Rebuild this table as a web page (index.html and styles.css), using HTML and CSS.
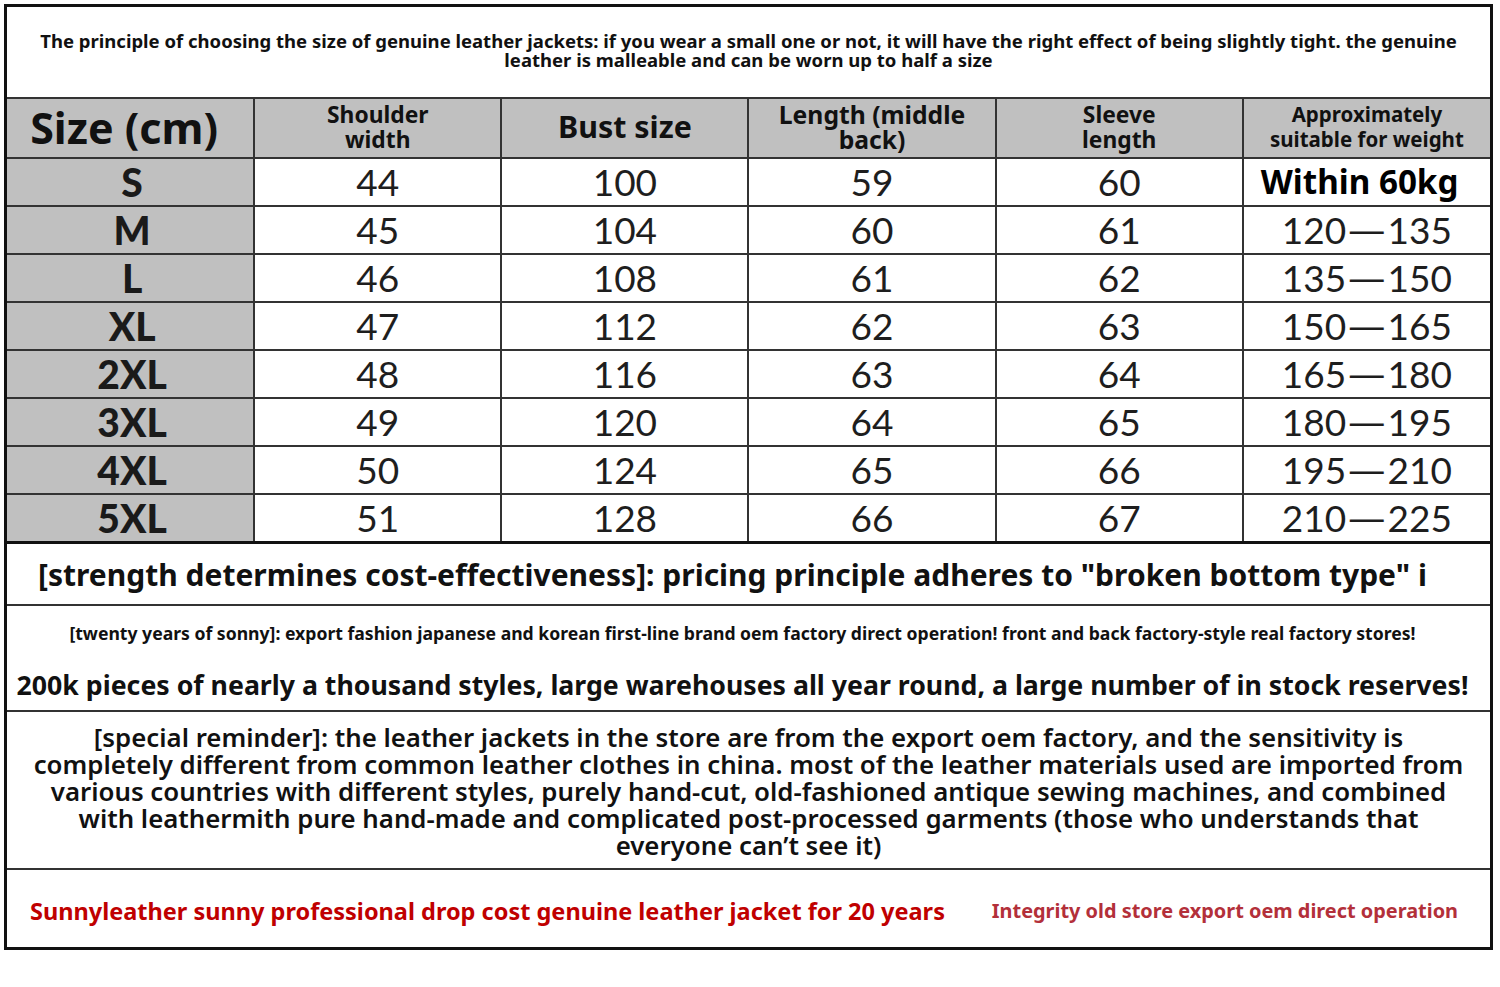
FILE: index.html
```html
<!DOCTYPE html>
<html>
<head>
<meta charset="utf-8">
<link rel="stylesheet" href="styles.css">
</head>
<body>
<div class="sheet">
  <div class="intro">
    <p>The principle of choosing the size of genuine leather jackets: if you wear a small one or not, it will have the right effect of being slightly tight. the genuine<br>leather is malleable and can be worn up to half a size</p>
  </div>
  <table class="chart">
    <thead>
      <tr>
        <th class="h-size">Size (cm)</th>
        <th class="h-sm">Shoulder<br>width</th>
        <th class="h-bust">Bust size</th>
        <th class="h-len">Length (middle<br>back)</th>
        <th class="h-sm">Sleeve<br>length</th>
        <th class="h-wt">Approximately<br>suitable for weight</th>
      </tr>
    </thead>
    <tbody>
      <tr><td class="sz">S</td><td>44</td><td>100</td><td>59</td><td>60</td><td class="within">Within 60kg</td></tr>
      <tr><td class="sz">M</td><td>45</td><td>104</td><td>60</td><td>61</td><td>120<span class="dash">—</span>135</td></tr>
      <tr><td class="sz">L</td><td>46</td><td>108</td><td>61</td><td>62</td><td>135<span class="dash">—</span>150</td></tr>
      <tr><td class="sz">XL</td><td>47</td><td>112</td><td>62</td><td>63</td><td>150<span class="dash">—</span>165</td></tr>
      <tr><td class="sz">2XL</td><td>48</td><td>116</td><td>63</td><td>64</td><td>165<span class="dash">—</span>180</td></tr>
      <tr><td class="sz">3XL</td><td>49</td><td>120</td><td>64</td><td>65</td><td>180<span class="dash">—</span>195</td></tr>
      <tr><td class="sz">4XL</td><td>50</td><td>124</td><td>65</td><td>66</td><td>195<span class="dash">—</span>210</td></tr>
      <tr><td class="sz">5XL</td><td>51</td><td>128</td><td>66</td><td>67</td><td>210<span class="dash">—</span>225</td></tr>
    </tbody>
  </table>
  <div class="strength">[strength determines cost-effectiveness]: pricing principle adheres to "broken bottom type" i</div>
  <div class="twenty">
    <p class="twenty-small">[twenty years of sonny]: export fashion japanese and korean first-line brand oem factory direct operation! front and back factory-style real factory stores!</p>
    <p class="twenty-big">200k pieces of nearly a thousand styles, large warehouses all year round, a large number of in stock reserves!</p>
  </div>
  <div class="reminder">
    <p>[special reminder]: the leather jackets in the store are from the export oem factory, and the sensitivity is<br>completely different from common leather clothes in china. most of the leather materials used are imported from<br>various countries with different styles, purely hand-cut, old-fashioned antique sewing machines, and combined<br>with leathermith pure hand-made and complicated post-processed garments (those who understands that<br>everyone can’t see it)</p>
  </div>
  <div class="brand">
    <span class="brand-main">Sunnyleather sunny professional drop cost genuine leather jacket for 20 years</span>
    <span class="brand-side">Integrity old store export oem direct operation</span>
  </div>
</div>
</body>
</html>
```

FILE: styles.css
```css
html, body {
  margin: 0;
  padding: 0;
  background: #fff;
}
body {
  font-family: "Noto Sans", "Open Sans", sans-serif;
  color: #111;
}
p { margin: 0; }

.sheet {
  margin: 4px 0 0 4px;
  width: 1483px;
  border: 3px solid #111;
  background: #fff;
}

.intro {
  height: 92px;
  border-bottom: 2px solid #333;
  display: flex;
  align-items: center;
  justify-content: center;
  text-align: center;
  padding: 0 10px;
  box-sizing: border-box;
}
.intro p {
  font-weight: 700;
  font-size: 18.5px;
  line-height: 19px;
  margin-top: -4px;
  white-space: nowrap;
}

.chart {
  width: 100%;
  border-collapse: collapse;
  table-layout: fixed;
}
.chart th, .chart td {
  border: 2px solid #333;
  padding: 0;
  text-align: center;
  vertical-align: middle;
}
.chart tr > :first-child { border-left: none; }
.chart tr > :last-child { border-right: none; }
.chart thead th {
  border-top: none;
  background: #c0c0c0;
  height: 59px;
  font-weight: 700;
  color: #111;
  padding-bottom: 3px;
  box-sizing: border-box;
}
.chart tbody tr:last-child td { border-bottom: 3px solid #111; }
.chart thead th.h-size { font-size: 43px; line-height: 44px; padding: 0 12px 0 0; }
.h-sm { font-size: 22.8px; line-height: 25px; }
.h-bust { font-size: 30.4px; }
.h-len { font-size: 24.7px; line-height: 25px; }
.h-wt { font-size: 20.5px; line-height: 25px; }

.chart td {
  height: 46px;
  font-family: "Lato", "Liberation Sans", sans-serif;
  font-size: 37px;
  color: #1e1e1e;
  line-height: 44px;
}
.chart td.sz {
  background: #c0c0c0;
  font-weight: 900;
  font-size: 39px;
  color: #1a1a1a;
  padding-left: 4px;
}
.chart td.within {
  font-family: "Noto Sans", sans-serif;
  font-weight: 700;
  font-size: 33.2px;
  color: #000;
  text-align: left;
  padding-left: 17px;
}
.dash {
  display: inline-block;
  transform: scaleX(1.38);
  margin: 0 6px;
}

.strength {
  height: 60px;
  border-bottom: 2px solid #333;
  display: flex;
  align-items: center;
  padding-left: 31px;
  font-weight: 700;
  font-size: 30px;
  color: #111;
  white-space: nowrap;
}

.twenty {
  height: 106px;
  border-bottom: 2px solid #333;
  text-align: center;
  box-sizing: border-box;
  padding: 16px 12px 0 0;
  white-space: nowrap;
}
.twenty-small {
  font-weight: 700;
  font-size: 17.6px;
  line-height: 22px;
}
.twenty-big {
  font-weight: 700;
  font-size: 26.7px;
  line-height: 34px;
  margin-top: 24px;
}

.reminder {
  height: 158px;
  border-bottom: 2px solid #333;
  text-align: center;
  box-sizing: border-box;
  padding-top: 12px;
  white-space: nowrap;
}
.reminder p {
  font-weight: 600;
  font-size: 25.8px;
  line-height: 27px;
}

.brand {
  height: 77px;
  display: flex;
  align-items: center;
  justify-content: space-between;
  padding: 4px 32px 0 23px;
  box-sizing: border-box;
  font-weight: 700;
}
.brand-main {
  color: #c00000;
  font-size: 23.5px;
}
.brand-side {
  color: #b3303a;
  font-size: 19.9px;
}
```
